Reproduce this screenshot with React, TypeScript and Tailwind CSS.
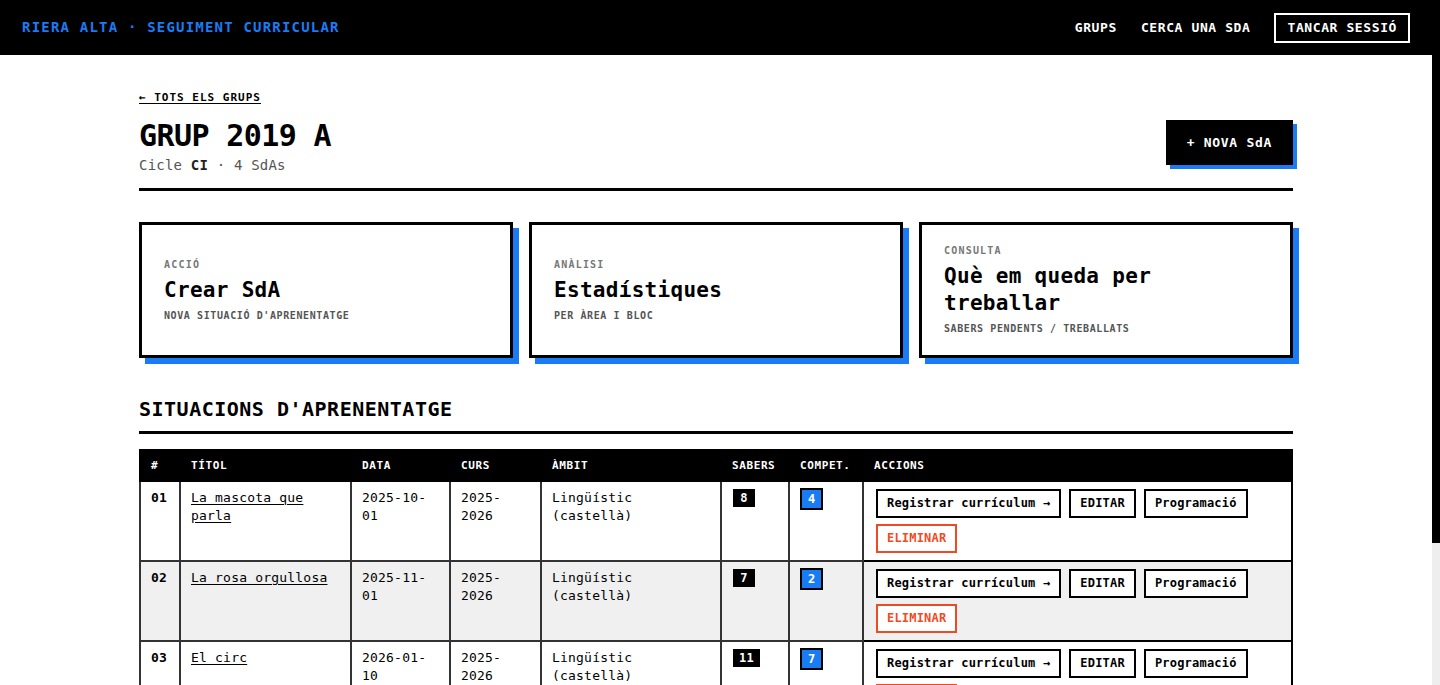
const sdas = [
  { n: "01", title: "La mascota que parla", date: ["2025-10-", "01"], curs: ["2025-", "2026"], ambit: "Lingüístic (castellà)", sabers: 8, compet: 4 },
  { n: "02", title: "La rosa orgullosa", date: ["2025-11-", "01"], curs: ["2025-", "2026"], ambit: "Lingüístic (castellà)", sabers: 7, compet: 2 },
  { n: "03", title: "El circ", date: ["2026-01-", "10"], curs: ["2025-", "2026"], ambit: "Lingüístic (castellà)", sabers: 11, compet: 7 },
  { n: "04", title: "Els animals del bosc", date: ["2026-02-", "15"], curs: ["2025-", "2026"], ambit: "Coneixement del medi", sabers: 9, compet: 3 },
];

const cards = [
  { label: "ACCIÓ", title: "Crear SdA", sub: "NOVA SITUACIÓ D'APRENENTATGE" },
  { label: "ANÀLISI", title: "Estadístiques", sub: "PER ÀREA I BLOC" },
  { label: "CONSULTA", title: "Què em queda per treballar", sub: "SABERS PENDENTS / TREBALLATS" },
];

const mono = "font-['DejaVu_Sans_Mono','Liberation_Mono',monospace]";

function ActionButton({ children, danger }: { children: React.ReactNode; danger?: boolean }) {
  return (
    <button
      className={`border-2 bg-white px-[9px] py-[5px] text-[12px] font-bold leading-[15px] tracking-[0.2px] ${
        danger ? "border-[#f04a24] text-[#f04a24]" : "border-black text-black"
      }`}
    >
      {children}
    </button>
  );
}

export default function App() {
  return (
    <div className={`${mono} flex h-screen bg-white text-black`}>
      <div className="min-w-0 flex-1 overflow-y-auto [&::-webkit-scrollbar]:hidden">
        {/* Top bar */}
        <header className="flex h-[55px] items-center justify-between bg-black px-[22px]">
          <span className="text-[14px] font-bold tracking-[1.2px] text-[#1a7cf5]">
            RIERA ALTA · SEGUIMENT CURRICULAR
          </span>
          <nav className="flex items-center gap-6 text-[13px] font-bold tracking-[0.6px] text-white">
            <a>GRUPS</a>
            <a>CERCA UNA SDA</a>
            <button className="h-[30px] border-2 border-white px-[11px] tracking-[0.6px]">TANCAR SESSIÓ</button>
          </nav>
        </header>

        <main className="mx-auto w-[1154px] pb-[60px] pt-9">
          <a className="block text-[11px] font-bold leading-[14px] tracking-[1px] underline underline-offset-2">
            ← TOTS ELS GRUPS
          </a>

          {/* Group heading */}
          <div className="mt-[14px] flex items-start justify-between border-b-[3px] border-black pb-[13px]">
            <div>
              <h1 className="text-[30px] font-bold leading-[33px] tracking-[-0.6px]">GRUP 2019 A</h1>
              <p className="mt-[3px] text-[14px] leading-5 tracking-[0.2px] text-[#555]">
                Cicle <b className="text-[#222]">CI</b> · 4 SdAs
              </p>
            </div>
            <button className="mt-[1px] h-[45px] bg-black px-[21px] text-[13px] font-bold tracking-[0.7px] text-white shadow-[4px_4px_0_#1a7cf5]">
              + NOVA SdA
            </button>
          </div>

          {/* Shortcut cards */}
          <div className="mt-[31px] grid grid-cols-3 gap-4">
            {cards.map((c) => (
              <div
                key={c.label}
                className="flex min-h-[136px] flex-col justify-center border-[3px] border-black bg-white px-[22px] py-[18px] shadow-[6px_6px_0_#1a7cf5]"
              >
                <span className="text-[10px] font-bold leading-[14px] tracking-[1.2px] text-[#777]">{c.label}</span>
                <span className="mt-[5px] text-[21px] font-bold leading-[27px] tracking-[0.3px]">{c.title}</span>
                <span className="mt-[5px] text-[10px] font-bold leading-[14px] tracking-[0.6px] text-[#555]">{c.sub}</span>
              </div>
            ))}
          </div>

          <h2 className="mt-[37px] border-b-[3px] border-black pb-2 text-[20px] font-bold leading-7 tracking-[0.5px]">
            SITUACIONS D'APRENENTATGE
          </h2>

          {/* SdA table */}
          <table className="mt-[15px] w-full table-fixed border-collapse text-left text-[13px] leading-[18px] tracking-[0.2px]">
            <thead>
              <tr className="bg-black text-[11px] font-bold leading-[15px] tracking-[0.6px] text-white [&>th]:border-2 [&>th]:border-black [&>th]:px-[10px] [&>th]:py-[7px]">
                <th className="w-[40px]">#</th>
                <th className="w-[171px]">TÍTOL</th>
                <th className="w-[99px]">DATA</th>
                <th className="w-[91px]">CURS</th>
                <th className="w-[180px]">ÀMBIT</th>
                <th className="w-[68px]">SABERS</th>
                <th className="w-[74px]">COMPET.</th>
                <th>ACCIONS</th>
              </tr>
            </thead>
            <tbody>
              {sdas.map((s, i) => (
                <tr key={s.n} className={i % 2 === 1 ? "bg-[#f0f0f0]" : "bg-white"}>
                  <td className="border-2 border-[#333] px-[10px] py-[7px] align-top font-bold">{s.n}</td>
                  <td className="border-2 border-[#333] px-[10px] py-[7px] align-top">
                    <a className="underline underline-offset-2">{s.title}</a>
                  </td>
                  <td className="border-2 border-[#333] px-[10px] py-[7px] align-top">
                    {s.date[0]}
                    <wbr />
                    {s.date[1]}
                  </td>
                  <td className="border-2 border-[#333] px-[10px] py-[7px] align-top">
                    {s.curs[0]}
                    <wbr />
                    {s.curs[1]}
                  </td>
                  <td className="border-2 border-[#333] px-[10px] py-[7px] align-top">{s.ambit}</td>
                  <td className="border-2 border-[#333] px-[11px] py-[7px] align-top">
                    <span className="inline-block min-w-[22px] bg-black px-[6px] text-center text-[12px] font-bold leading-[18px] text-white">
                      {s.sabers}
                    </span>
                  </td>
                  <td className="border-2 border-[#333] px-[10px] py-[6px] align-top">
                    <span className="inline-block border-2 border-black bg-[#1a7cf5] px-[6px] text-center text-[12px] font-bold leading-[18px] text-white">
                      {s.compet}
                    </span>
                  </td>
                  <td className="border-2 border-black px-3 py-[7px] align-top">
                    <div className="flex flex-wrap gap-x-2 gap-y-1.5">
                      <ActionButton>Registrar currículum →</ActionButton>
                      <ActionButton>EDITAR</ActionButton>
                      <ActionButton>Programació</ActionButton>
                      <ActionButton danger>ELIMINAR</ActionButton>
                    </div>
                  </td>
                </tr>
              ))}
            </tbody>
          </table>
        </main>
      </div>

      {/* Page scrollbar */}
      <div className="w-2 shrink-0 bg-[#eeeeee]">
        <div className="h-[543px] bg-black" />
      </div>
    </div>
  );
}
